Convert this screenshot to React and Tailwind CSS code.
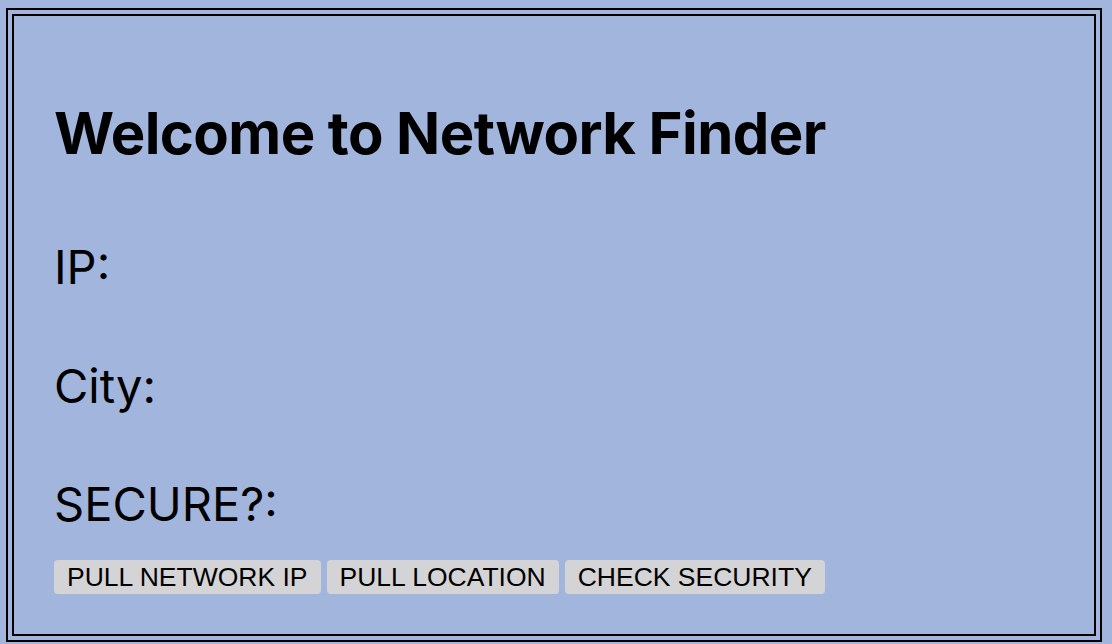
export default function App() {
  const buttons = ['PULL NETWORK IP', 'PULL LOCATION', 'CHECK SECURITY']

  return (
    <div className="w-[1112px] h-[644px] overflow-hidden bg-[#a2b5dc] pt-[8px] pl-[6px]">
      <div className="w-[1096px] h-[634px] border-2 border-black p-[4px]">
        <div className="h-full border-2 border-black pl-[40px] text-black" style={{ fontFamily: 'Inter, "Noto Sans", sans-serif' }}>
          <h1 className="mt-[88px] text-[58px] leading-none font-bold tracking-[-0.01em]">Welcome to Network Finder</h1>

          <p className="mt-[81px] text-[47px] leading-none">IP:</p>
          <p className="mt-[72px] text-[47px] leading-none">City:</p>
          <p className="mt-[71px] text-[47px] leading-none">SECURE?:</p>

          <div className="mt-[33px] flex gap-[6px]">
            {buttons.map((label) => (
              <button
                key={label}
                className="h-[34px] rounded-[4px] bg-[#d4d4d6] px-[13px] text-[26.5px] leading-none text-black"
                style={{ fontFamily: '"Liberation Sans", Arial, sans-serif' }}
              >
                {label}
              </button>
            ))}
          </div>
        </div>
      </div>
    </div>
  )
}
